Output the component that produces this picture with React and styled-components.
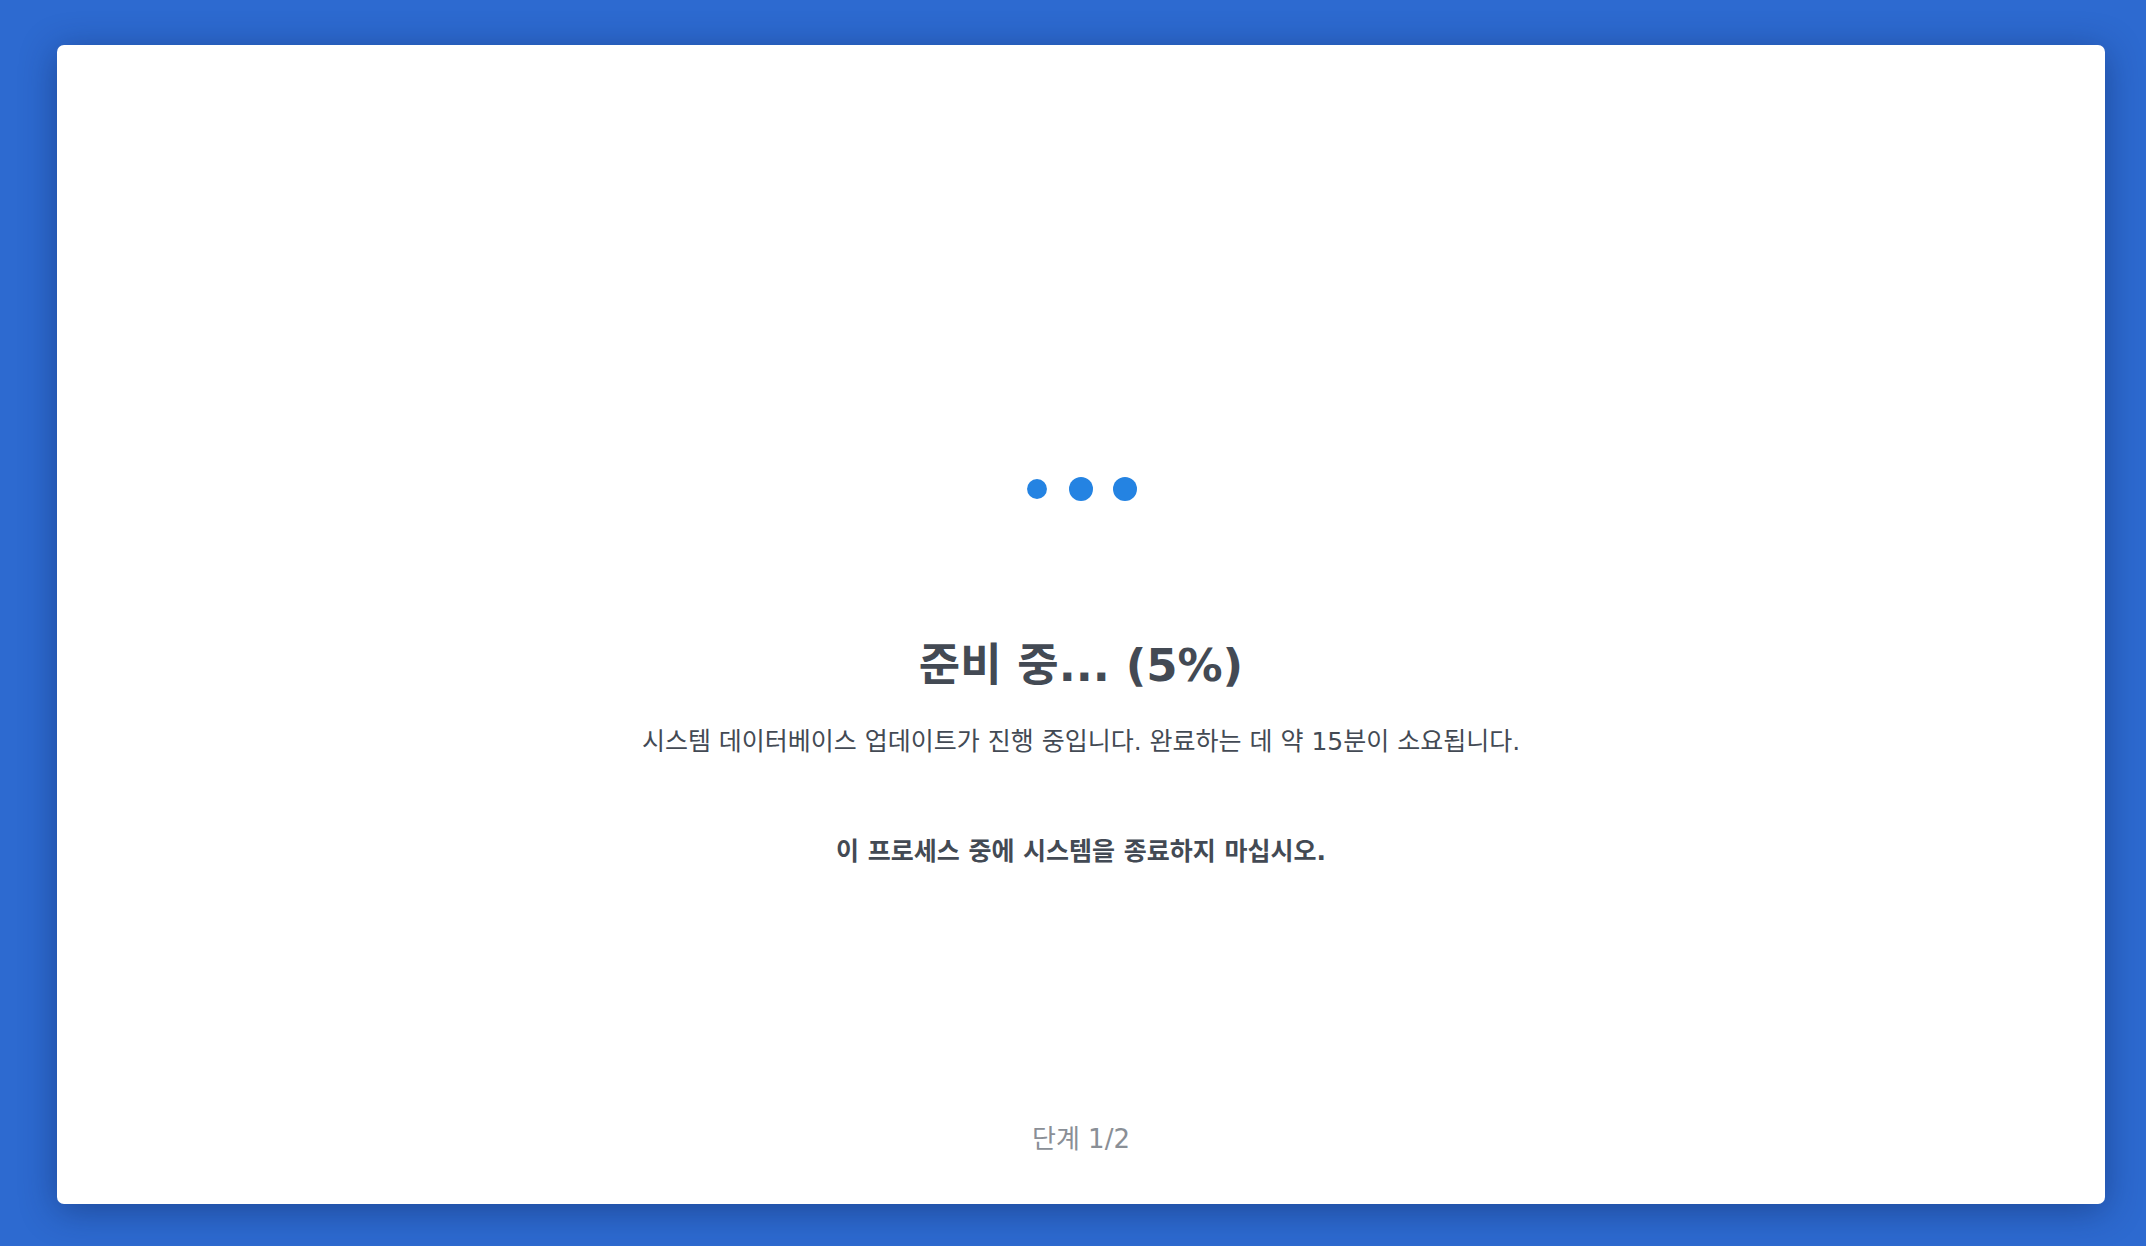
import React from "react";
import styled, { createGlobalStyle, keyframes } from "styled-components";

const GlobalStyle = createGlobalStyle`
  html, body {
    margin: 0;
    padding: 0;
    height: 100%;
  }
  body {
    background: #2d6ad0;
    font-family: "DejaVu Sans", "Noto Sans CJK KR", sans-serif;
  }
`;

const Page = styled.div`
  box-sizing: border-box;
  width: 100vw;
  height: 100vh;
  padding: 45px 41px 42px 57px;
  display: flex;
`;

const Card = styled.div`
  flex: 1;
  display: flex;
  flex-direction: column;
  align-items: center;
  background: #ffffff;
  border-radius: 7px;
  box-shadow: 0 6px 36px rgba(10, 30, 80, 0.45);
  padding-top: 432px;
  padding-bottom: 48px;
  color: #434a54;
`;

const Dots = styled.div`
  display: flex;
  align-items: center;
  gap: 20px;
  height: 24px;
`;

const Dot = styled.span`
  width: 24px;
  height: 24px;
  border-radius: 50%;
  background: #2483e2;
  transform: scale(${(p) => p.$scale});
`;

const Title = styled.h1`
  margin: 138px 0 0;
  font-size: 45px;
  line-height: 54px;
  font-weight: bold;
  color: #434a54;
`;

const Description = styled.p`
  margin: 32px 0 0;
  font-size: 25px;
  line-height: 34px;
  color: #434a54;
`;

const Warning = styled.p`
  margin: 76px 0 0;
  font-size: 25px;
  line-height: 34px;
  font-weight: bold;
  color: #434a54;
`;

const Step = styled.div`
  margin-top: auto;
  font-size: 26px;
  line-height: 34px;
  color: #8a8f96;
`;

export default function App() {
  return (
    <>
      <GlobalStyle />
      <Page>
        <Card>
          <Dots>
            <Dot $scale={0.83} />
            <Dot $scale={1} />
            <Dot $scale={1} />
          </Dots>
          <Title>준비 중... (5%)</Title>
          <Description>
            시스템 데이터베이스 업데이트가 진행 중입니다. 완료하는 데 약 15분이 소요됩니다.
          </Description>
          <Warning>이 프로세스 중에 시스템을 종료하지 마십시오.</Warning>
          <Step>단계 1/2</Step>
        </Card>
      </Page>
    </>
  );
}
